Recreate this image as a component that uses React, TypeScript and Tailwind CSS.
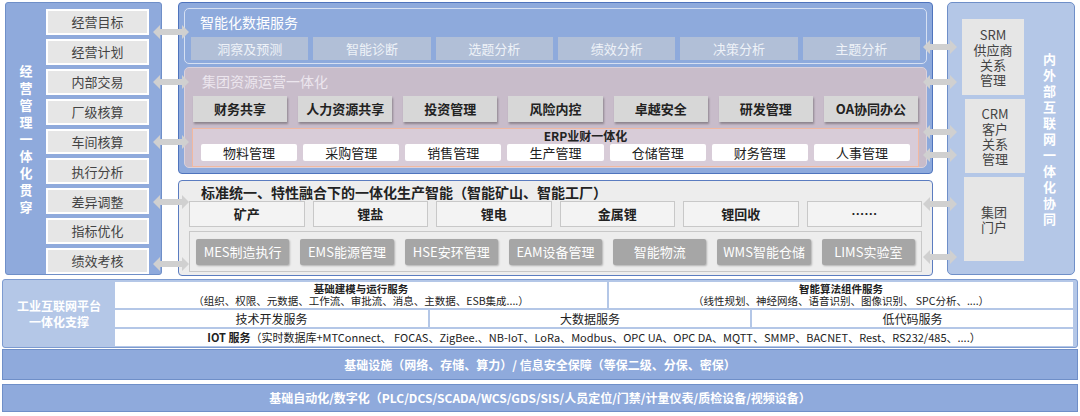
import React from "react";

const F = { fontFamily: '"Noto Sans CJK SC","Noto Sans",sans-serif' };

function Arrow({ w = 38 }: { w?: number }) {
  return (
    <svg width={w} height="14" viewBox={`0 0 ${w} 14`}>
      <polygon points={`0,7 7,0 7,4 ${w - 7},4 ${w - 7},0 ${w},7 ${w - 7},14 ${w - 7},10 7,10 7,14`} fill="#d0d0d0" />
    </svg>
  );
}

const leftItems = ["经营目标", "经营计划", "内部交易", "厂级核算", "车间核算", "执行分析", "差异调整", "指标优化", "绩效考核"];
const tabs = ["洞察及预测", "智能诊断", "选题分析", "绩效分析", "决策分析", "主题分析"];
const bold = ["财务共享", "人力资源共享", "投资管理", "风险内控", "卓越安全", "研发管理", "OA协同办公"];
const erp = ["物料管理", "采购管理", "销售管理", "生产管理", "仓储管理", "财务管理", "人事管理"];
const prods = ["矿产", "锂盐", "锂电", "金属锂", "锂回收", "……"];
const sys = ["MES制造执行", "EMS能源管理", "HSE安环管理", "EAM设备管理", "智能物流", "WMS智能仓储", "LIMS实验室"];

export default function App() {
  return (
    <div style={F} className="w-[1080px] h-[416px] bg-white relative overflow-hidden text-[#222]">
      <div className="flex h-[276px] pt-[2px] px-[5px]">
        {/* left */}
        <div className="w-[157px] h-[273px] bg-[#8faadc] border border-[#6f8fc8] rounded-[3px] flex shrink-0">
          <div className="w-[40px] flex items-center justify-center">
            <div className="w-[14px] text-white font-bold text-[13px] leading-[17px] text-center">经营管理一体化贯穿</div>
          </div>
          <div className="flex flex-col gap-[4px] pt-[6px]">
            {leftItems.map((t) => (
              <div key={t} className="w-[103px] h-[26px] bg-[#e6e6e6] border-2 border-white flex items-center justify-center text-[13px] text-[#444]">{t}</div>
            ))}
          </div>
        </div>
        {/* arrows left */}
        <div className="w-[16px] relative shrink-0 z-10">
          {[30, 80, 140, 200, 262].map((y) => (
            <div key={y} className="absolute left-[-9px]" style={{ top: y - 7 }}><Arrow w={36} /></div>
          ))}
        </div>
        {/* center */}
        <div className="w-[755px] shrink-0 flex flex-col gap-[6px]">
          <div className="h-[172px] bg-[#8eaadc] border border-[#4f74bd] rounded-[4px] p-[5px] flex flex-col gap-[3px]">
            <div className="h-[56px] bg-[#8eaadc] border border-[#d6e0f2] rounded-[5px] px-[6px] pt-[2px]">
              <div className="text-[14px] text-white pl-[9px] leading-[22px]">智能化数据服务</div>
              <div className="flex gap-[5px] mt-[4px]">
                {tabs.map((t) => (
                  <div key={t} className="flex-1 h-[23px] bg-[#b1bfd7] flex items-center justify-center text-[13px] text-[#eef2f8]">{t}</div>
                ))}
              </div>
            </div>
            <div className="flex-1 bg-[#c8bcca] border border-[#dad2dc] rounded-[5px] px-[7px] pt-[2px]">
              <div className="text-[14px] text-[#ece6ee] pl-[10px] leading-[22px]">集团资源运营一体化</div>
              <div className="flex gap-[11px] mt-[4px] px-[1px]">
                {bold.map((t) => (
                  <div key={t} className="flex-1 h-[26px] bg-[#d7d7d7] shadow-[1px_2px_2px_rgba(0,0,0,0.3)] flex items-center justify-center text-[13px] font-bold whitespace-nowrap">{t}</div>
                ))}
              </div>
              <div className="mt-[6px] h-[39px] border border-[#f1b8a0] bg-[#d8ccd8] px-[8px]">
                <div className="text-[12px] font-bold text-center leading-[14px] pl-[60px]">ERP业财一体化</div>
                <div className="flex gap-[6px] mt-[1px]">
                  {erp.map((t) => (
                    <div key={t} className="flex-1 h-[17px] bg-white rounded-[2px] flex items-center justify-center text-[13px]">{t}</div>
                  ))}
                </div>
              </div>
            </div>
          </div>
          <div className="h-[97px] bg-[#ededed] border border-[#5b7cc0] rounded-[4px] px-[10px] pt-[1px]">
            <div className="text-[14px] font-bold leading-[20px] pl-[12px]">标准统一、特性融合下的一体化生产智能（智能矿山、智能工厂）</div>
            <div className="flex gap-[8px] -mt-[1px]">
              {prods.map((t) => (
                <div key={t} className="flex-1 h-[26px] bg-[#f3f3f3] border border-[#c8c8c8] flex items-center justify-center text-[13px] font-bold">{t}</div>
              ))}
            </div>
            <div className="mt-[4px] h-[41px] border border-[#c8c8c8] flex items-center gap-[11px] px-[6px]">
              {sys.map((t) => (
                <div key={t} className="flex-1 h-[26px] bg-[#a6a6a6] shadow-[1px_1px_2px_rgba(0,0,0,0.25)] rounded-[2px] flex items-center justify-center text-[13px] text-white whitespace-nowrap">{t}</div>
              ))}
            </div>
          </div>
        </div>
        {/* arrows right */}
        <div className="w-[14px] relative shrink-0 z-10">
          {[45, 80, 130, 153, 202, 255].map((y) => (
            <div key={y} className="absolute left-[-10px]" style={{ top: y - 7 }}><Arrow w={34} /></div>
          ))}
        </div>
        {/* right */}
        <div className="w-[128px] shrink-0 h-[273px] bg-[#b4c7e7] border border-[#6f8fc8] rounded-[5px] flex">
          <div className="flex flex-col gap-[4px] pt-[16px] pl-[14px]">
            <div className="w-[62px] h-[76px] bg-[#e6e6e6] flex items-center justify-center text-center text-[13px] leading-[15px] text-[#444]">SRM<br />供应商<br />关系<br />管理</div>
            <div className="w-[60px] h-[74px] ml-[3px] bg-[#e6e6e6] flex items-center justify-center text-center text-[13px] leading-[15px] text-[#444]">CRM<br />客户<br />关系<br />管理</div>
            <div className="w-[60px] h-[84px] ml-[2px] bg-[#e6e6e6] flex items-center justify-center text-center text-[13px] leading-[15px] text-[#444]">集团<br />门户</div>
          </div>
          <div className="flex-1 flex items-center justify-center">
            <div className="w-[14px] text-white font-bold text-[13px] leading-[16px] text-center">内外部互联网一体化协同</div>
          </div>
        </div>
      </div>
      {/* platform */}
      <div className="mx-[2px] mt-[3px] h-[69px] bg-[#b4c7e7] border border-[#7d9bd0] rounded-[3px] flex">
        <div className="w-[112px] flex items-center justify-center text-center text-white font-bold text-[12px] leading-[16px]">工业互联网平台<br />一体化支撑</div>
        <div className="flex-1 flex flex-col gap-[2px] pt-[2px] pr-[4px]">
          <div className="flex gap-[2px] h-[26px]">
            <div className="w-[492px] bg-white flex flex-col items-center justify-center text-[10.5px] leading-[12px]">
              <div className="font-bold">基础建模与运行服务</div>
              <div>（组织、权限、元数据、工作流、审批流、消息、主数据、ESB集成....）</div>
            </div>
            <div className="flex-1 bg-white flex flex-col items-center justify-center text-[10.5px] leading-[12px]">
              <div className="font-bold">智能算法组件服务</div>
              <div>（线性规划、神经网络、语音识别、图像识别、 SPC分析、....）</div>
            </div>
          </div>
          <div className="flex gap-[2px] h-[17px] text-[12px]">
            <div className="w-[313px] bg-white flex items-center justify-center">技术开发服务</div>
            <div className="w-[320px] bg-white flex items-center justify-center">大数据服务</div>
            <div className="flex-1 bg-white flex items-center justify-center">低代码服务</div>
          </div>
          <div className="h-[17px] bg-white flex items-center justify-center text-[11px] whitespace-nowrap">
            <span className="font-bold">IOT 服务</span>（实时数据库+MTConnect、 FOCAS、ZigBee.、NB-IoT、LoRa、Modbus、OPC UA、OPC DA、MQTT、SMMP、BACNET、Rest、RS232/485、....）
          </div>
        </div>
      </div>
      <div className="mx-[2px] mt-[1px] h-[31px] bg-[#8faadc] border border-[#6f8fc8] flex items-center justify-center text-white font-bold text-[12px]">基础设施（网络、存储、算力）/ 信息安全保障（等保二级、分保、密保）</div>
      <div className="mx-[2px] mt-[4px] h-[28px] bg-[#8faadc] border border-[#6f8fc8] flex items-center justify-center text-white font-bold text-[12px]">基础自动化/数字化（PLC/DCS/SCADA/WCS/GDS/SIS/人员定位/门禁/计量仪表/质检设备/视频设备）</div>
    </div>
  );
}
